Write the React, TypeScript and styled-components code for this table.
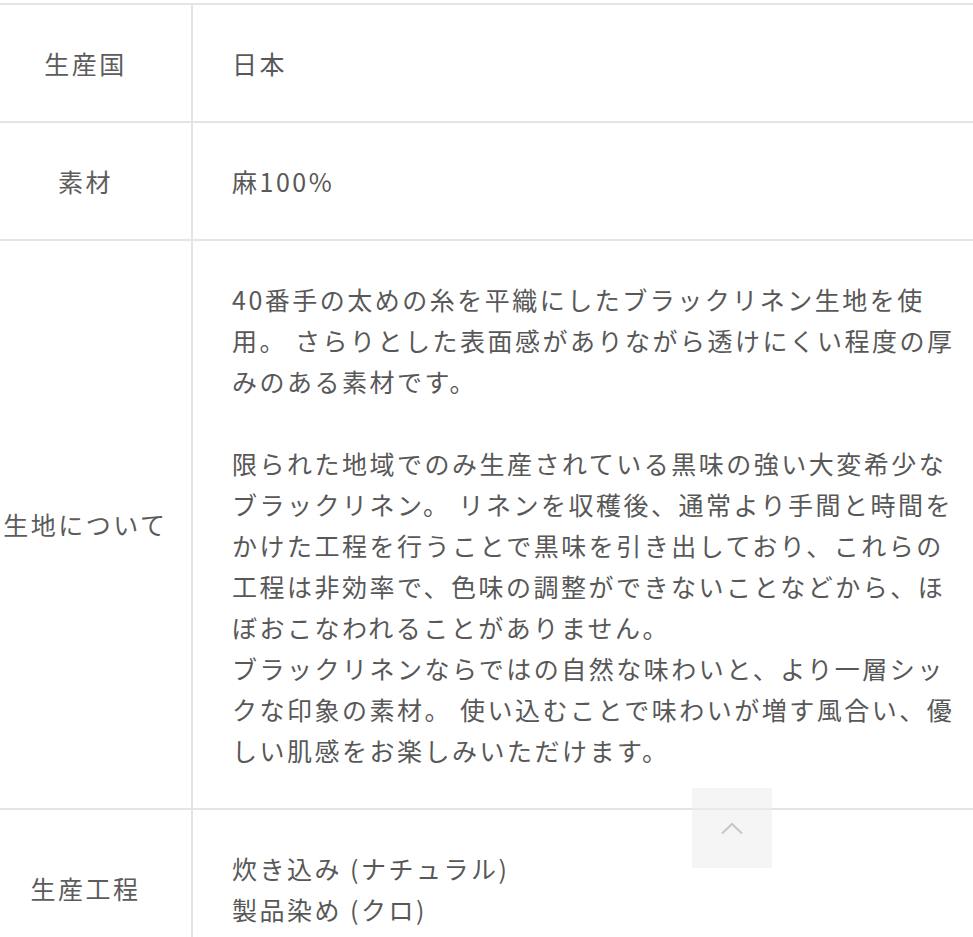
import styled, { createGlobalStyle } from "styled-components";

const GlobalStyle = createGlobalStyle`
    html, body {
        margin: 0;
        padding: 0;
        background: #ffffff;
        overflow: hidden;
    }
    body {
        font-family: "Noto Sans CJK JP", "Noto Sans", sans-serif;
    }
`;

const Page = styled.div`
    height: 100vh;
    overflow: hidden;
    padding-top: 3px;
    box-sizing: border-box;
`;

const SpecTable = styled.dl`
    margin: 0;
    border-top: 2px solid #e4e4e4;
`;

const Row = styled.div`
    display: grid;
    grid-template-columns: 193px 1fr;
    border-bottom: 2px solid #e4e4e4;
`;

const Label = styled.dt`
    display: flex;
    align-items: center;
    justify-content: center;
    padding-right: 20px;
    border-right: 2px solid #e4e4e4;
    font-size: 25px;
    letter-spacing: 2.5px;
    line-height: 41px;
    color: #5c5c5c;
`;

const Value = styled.dd`
    margin: 0;
    padding: 38px 15px 37px 39px;
    font-size: 25px;
    letter-spacing: 2.5px;
    line-height: 41px;
    color: #585858;
`;

const Para = styled.p`
    margin: 0 0 41px;

    &:last-child {
        margin-bottom: 0;
    }
`;

const ToTopButton = styled.button`
    position: fixed;
    right: 201px;
    bottom: 69px;
    width: 80px;
    height: 80px;
    border: none;
    padding: 0;
    background: rgba(236, 236, 236, 0.55);
    display: flex;
    align-items: center;
    justify-content: center;
    cursor: pointer;
`;

const specs = [
    { label: "生産国", value: "日本" },
    { label: "素材", value: "麻100%" },
];

const App = () => {
    return (
        <Page>
            <GlobalStyle />
            <SpecTable>
                {specs.map((s) => (
                    <Row key={s.label}>
                        <Label>{s.label}</Label>
                        <Value>{s.value}</Value>
                    </Row>
                ))}
                <Row>
                    <Label>生地について</Label>
                    <Value>
                        <Para>
                            40番手の太めの糸を平織にしたブラックリネン生地を使用。
                            さらりとした表面感がありながら透けにくい程度の厚みのある素材です。
                        </Para>
                        <Para>
                            限られた地域でのみ生産されている黒味の強い大変希少なブラックリネン。
                            リネンを収穫後、通常より手間と時間をかけた工程を行うことで黒味を引き出しており、これらの工程は非効率で、色味の調整ができないことなどから、ほぼおこなわれることがありません。
                            <br />
                            ブラックリネンならではの自然な味わいと、より一層シックな印象の素材。
                            使い込むことで味わいが増す風合い、優しい肌感をお楽しみいただけます。
                        </Para>
                    </Value>
                </Row>
                <Row>
                    <Label>生産工程</Label>
                    <Value>
                        炊き込み (ナチュラル)
                        <br />
                        製品染め (クロ)
                    </Value>
                </Row>
            </SpecTable>
            <ToTopButton aria-label="ページトップへ">
                <svg width="24" height="13" viewBox="0 0 24 13" fill="none">
                    <polyline
                        points="2,11.5 12,2 22,11.5"
                        stroke="#c6c6c6"
                        strokeWidth="2"
                    />
                </svg>
            </ToTopButton>
        </Page>
    );
};

export default App;
